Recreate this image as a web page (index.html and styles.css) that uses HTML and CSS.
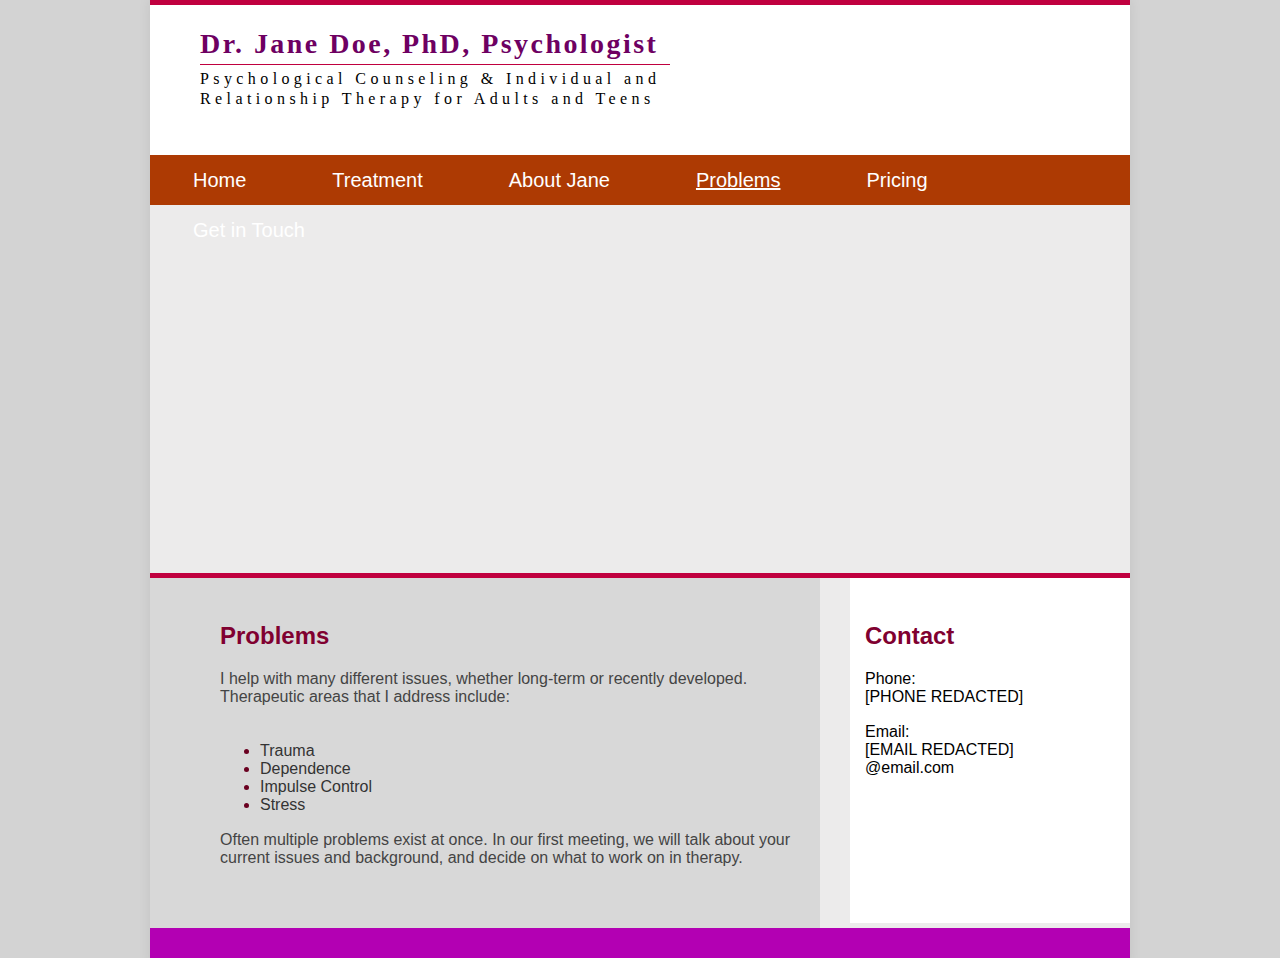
FILE: index.html
```html
<!DOCTYPE html>
<html>
<head>
<meta charset="utf-8">
<link rel="stylesheet" href="styles.css">
</head>
<body>
<div class="page">
  <header class="header">
    <div class="logo">
      <div class="logo-title">Dr. Jane Doe, PhD, Psychologist</div>
      <div class="logo-sub">Psychological Counseling &amp; Individual and<br>Relationship Therapy for Adults and Teens</div>
    </div>
  </header>
  <section class="hero">
    <nav class="nav">
      <a href="#">Home</a><a href="#">Treatment</a><a href="#">About Jane</a><a href="#" class="active">Problems</a><a href="#">Pricing</a><a href="#">Get in Touch</a>
    </nav>
  </section>
  <div class="content">
    <main class="main">
      <h2>Problems</h2>
      <p>I help with many different issues, whether long-term or recently developed. Therapeutic areas that I address include:</p>
      <ul>
        <li>Trauma</li>
        <li>Dependence</li>
        <li>Impulse Control</li>
        <li>Stress</li>
      </ul>
      <p>Often multiple problems exist at once. In our first meeting, we will talk about your current issues and background, and decide on what to work on in therapy.</p>
    </main>
    <aside class="side">
      <h2>Contact</h2>
      <p>Phone:<br>[PHONE REDACTED]</p>
      <p>Email:<br>[EMAIL REDACTED]<br>@email.com</p>
    </aside>
  </div>
  <footer class="footer"></footer>
</div>
</body>
</html>
```

FILE: styles.css
```css
html, body {
  margin: 0;
  padding: 0;
}
body {
  background: #d3d3d3;
  font-family: "Liberation Sans", Arial, sans-serif;
}
.page {
  width: 980px;
  margin: 0 auto;
  background: #ecebeb;
  box-shadow: 0 0 12px rgba(0, 0, 0, 0.08);
}
.header {
  background: #fff;
  border-top: 5px solid #c0003f;
  height: 150px;
  box-sizing: content-box;
  padding-left: 50px;
}
.logo {
  width: 470px;
  padding-top: 22px;
}
.logo-title {
  font-family: "Liberation Serif", "Times New Roman", serif;
  font-weight: bold;
  font-size: 28px;
  letter-spacing: 2.45px;
  color: #6e0062;
  line-height: 34px;
  border-bottom: 1px solid #c0003f;
  padding-bottom: 3px;
}
.logo-sub {
  font-family: "Liberation Serif", "Times New Roman", serif;
  font-size: 16px;
  letter-spacing: 4.4px;
  line-height: 20px;
  color: #000;
  margin-top: 4px;
  white-space: nowrap;
}
.hero {
  height: 418px;
}
.nav {
  height: 50px;
  background: #ad3a03;
  line-height: 50px;
  font-size: 20px;
}
.nav a {
  display: inline-block;
  padding: 0 43px;
  color: #fff;
  text-decoration: none;
}
.nav a.active {
  text-decoration: underline;
}
.content {
  display: flex;
  gap: 30px;
  border-top: 5px solid #c0003f;
  height: 350px;
}
.main {
  width: 670px;
  box-sizing: border-box;
  background: #d8d8d8;
  padding: 44px 15px 0 70px;
  color: #444;
  font-size: 16px;
  line-height: 18px;
}
.main h2, .side h2 {
  margin: 0 0 20px;
  font-size: 24px;
  line-height: 28px;
  color: #800030;
}
.main p {
  margin: 0 0 16px;
}
.main ul {
  margin: 36px 0 17px;
  padding-left: 40px;
  color: #333;
}
.main li::marker {
  color: #6a0020;
}
.side {
  flex: 1;
  background: #fff;
  margin-bottom: 5px;
  padding: 44px 15px 0;
  font-size: 16px;
  line-height: 18px;
  color: #000;
}
.side p {
  margin: 0 0 17px;
}
.footer {
  height: 40px;
  background: #b300b3;
}
```
